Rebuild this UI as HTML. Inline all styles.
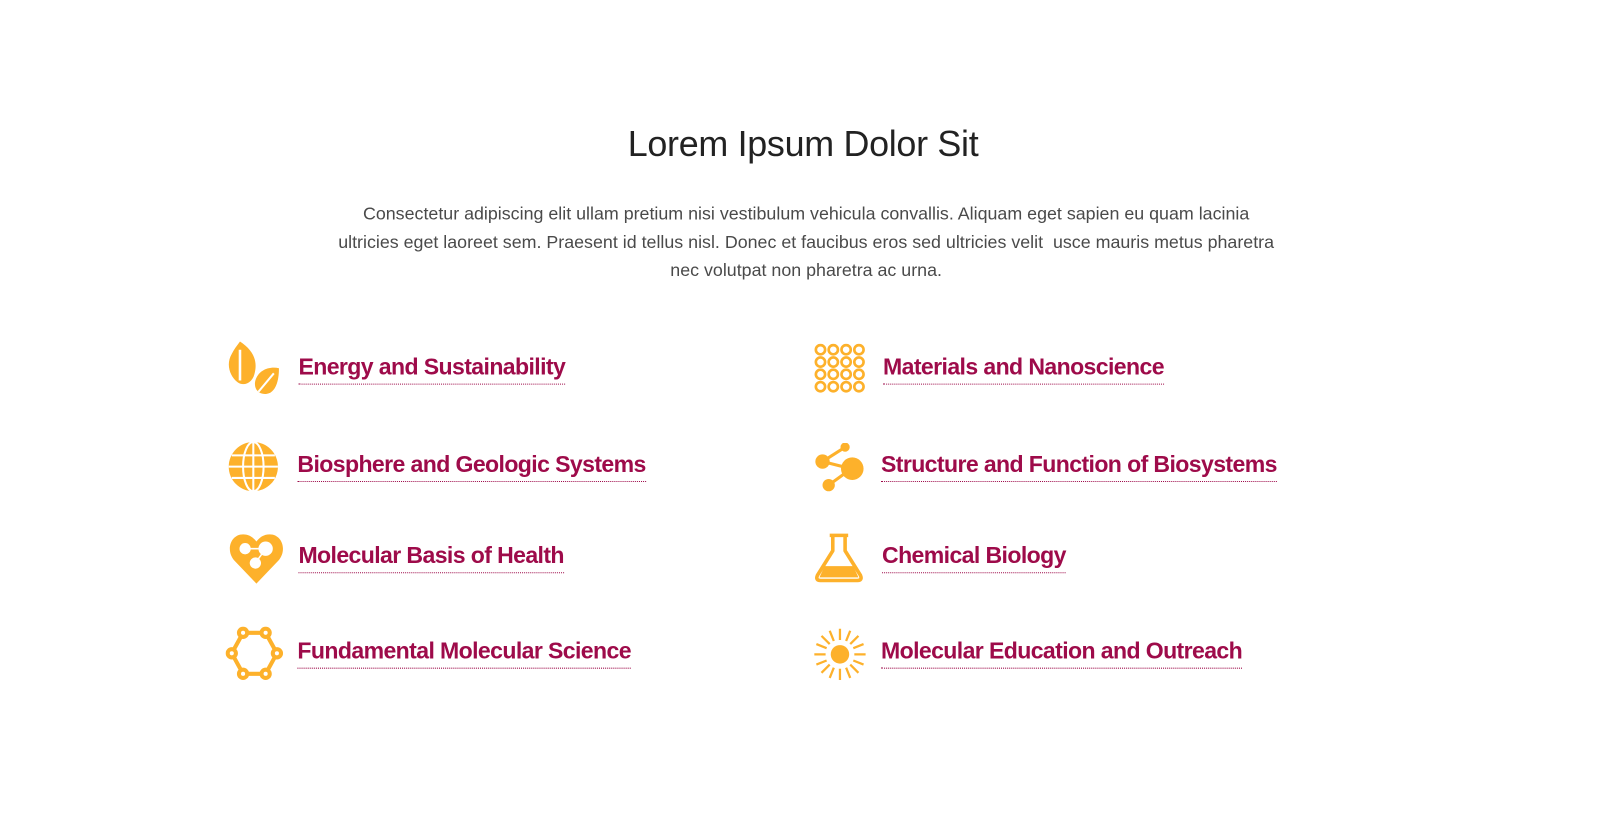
<!DOCTYPE html>
<html><head><meta charset="utf-8"><style>
body{margin:0;width:1600px;height:835px;background:#fff;font-family:"Liberation Sans",sans-serif;position:relative;overflow:hidden}
#w{position:absolute;left:0;top:0;width:1560px;height:815px;transform:scale(1.0256);transform-origin:0 0}
h1{position:absolute;top:121px;left:0;width:1566px;text-align:center;margin:0;font-weight:400;font-size:35px;color:#222;letter-spacing:-0.3px}
p{position:absolute;top:195px;left:0;width:1572px;text-align:center;margin:0;font-size:17.4px;line-height:27.5px;color:#4a4a4a;letter-spacing:0px}
.l{position:absolute;font-weight:700;font-size:22.5px;color:#9e0b4a;letter-spacing:-0.6px;border-bottom:1px dotted #9e0b4a;line-height:26px;padding-bottom:3px;white-space:nowrap}
svg{position:absolute}
</style></head><body><div id="w">
<h1>Lorem Ipsum Dolor Sit</h1>
<p>Consectetur adipiscing elit ullam pretium nisi vestibulum vehicula convallis. Aliquam eget sapien eu quam lacinia<br>ultricies eget laoreet sem. Praesent id tellus nisl. Donec et faucibus eros sed ultricies velit&nbsp; usce mauris metus pharetra<br>nec volutpat non pharetra ac urna.</p>

<svg style="left:222px;top:333px" width="52" height="52" viewBox="0 0 52 52"><g fill="#fdb12b">
<path d="M12 0 C24 8 30 18 26 32 C24 40 16 44 10 40 C2 34 -2 22 4 12 C6 8 9 4 12 0Z"/>
<path d="M50 26 C40 24 30 28 27 38 C25 46 30 52 38 51 C46 50 50 40 50 26Z"/></g>
<path d="M12 8 L12 38" stroke="#fff" stroke-width="2.5"/><path d="M45 31 L30 49" stroke="#fff" stroke-width="2"/></svg>
<span class="l" style="left:291px;top:345px">Energy and Sustainability</span>

<svg style="left:222px;top:430px" width="50" height="50" viewBox="0 0 50 50"><circle cx="25" cy="25" r="24" fill="#fdb12b"/>
<g stroke="#fff" stroke-width="2" fill="none"><ellipse cx="25" cy="25" rx="10" ry="24"/><line x1="25" y1="1" x2="25" y2="49"/><line x1="1" y1="25" x2="49" y2="25"/><line x1="4" y1="14" x2="46" y2="14"/><line x1="4" y1="36" x2="46" y2="36"/></g></svg>
<span class="l" style="left:290px;top:440px">Biosphere and Geologic Systems</span>

<svg style="left:223px;top:520px" width="54" height="50" viewBox="0 0 54 50"><path d="M27 49 L5 26 C-3 16 2 1 14 1 C20 1 24 4 27 8 C30 4 34 1 40 1 C52 1 57 16 49 26Z" fill="#fdb12b"/>
<g fill="#fff" stroke="#fff"><circle cx="16" cy="15" r="5"/><circle cx="36" cy="15" r="6.5"/><circle cx="26" cy="29" r="5"/><line x1="16" y1="15" x2="36" y2="15" stroke-width="1.5"/><line x1="26" y1="29" x2="36" y2="15" stroke-width="1.5"/></g></svg>
<span class="l" style="left:291px;top:529px">Molecular Basis of Health</span>

<svg style="left:220px;top:611px" width="56" height="52" viewBox="0 0 56 52"><g stroke="#fdb12b" stroke-width="4" fill="#fff">
<polygon points="17,6 39,6 50,26 39,46 17,46 6,26" fill="none"/>
<circle cx="17" cy="6" r="4"/><circle cx="39" cy="6" r="4"/><circle cx="50" cy="26" r="4"/><circle cx="39" cy="46" r="4"/><circle cx="17" cy="46" r="4"/><circle cx="6" cy="26" r="4"/></g></svg>
<span class="l" style="left:290px;top:622px">Fundamental Molecular Science</span>

<svg style="left:794px;top:335px" width="50" height="50" viewBox="0 0 50 50"><g stroke="#fdb12b" stroke-width="2.6" fill="none">
<circle cx="6" cy="6" r="4.5"/><circle cx="18.5" cy="6" r="4.5"/><circle cx="31" cy="6" r="4.5"/><circle cx="43.5" cy="6" r="4.5"/>
<circle cx="6" cy="18" r="4.5"/><circle cx="18.5" cy="18" r="4.5"/><circle cx="31" cy="18" r="4.5"/><circle cx="43.5" cy="18" r="4.5"/>
<circle cx="6" cy="30" r="4.5"/><circle cx="18.5" cy="30" r="4.5"/><circle cx="31" cy="30" r="4.5"/><circle cx="43.5" cy="30" r="4.5"/>
<circle cx="6" cy="42" r="4.5"/><circle cx="18.5" cy="42" r="4.5"/><circle cx="31" cy="42" r="4.5"/><circle cx="43.5" cy="42" r="4.5"/></g></svg>
<span class="l" style="left:861px;top:345px">Materials and Nanoscience</span>

<svg style="left:794px;top:432px" width="50" height="50" viewBox="0 0 50 50"><g fill="#fdb12b" stroke="#fdb12b" stroke-width="3">
<line x1="8" y1="18" x2="30" y2="4"/><line x1="8" y1="18" x2="36" y2="25"/><line x1="14" y1="41" x2="36" y2="25"/></g>
<g fill="#fdb12b"><circle cx="8" cy="18" r="7"/><circle cx="30" cy="4" r="4.5"/><circle cx="37" cy="25" r="11"/><circle cx="14" cy="41" r="6"/></g></svg>
<span class="l" style="left:859px;top:440px">Structure and Function of Biosystems</span>

<svg style="left:794px;top:519px" width="48" height="50" viewBox="0 0 48 50"><g fill="none" stroke="#fdb12b" stroke-width="3.5" stroke-linejoin="round">
<line x1="15" y1="3" x2="33" y2="3"/><path d="M18 3 V18 L3 42 Q1 47 6 47 H42 Q47 47 45 42 L30 18 V3"/></g>
<path d="M10 33 H38 L43 44 H5Z" fill="#fdb12b"/></svg>
<span class="l" style="left:860px;top:529px">Chemical Biology</span>

<svg style="left:793px;top:612px" width="52" height="52" viewBox="0 0 52 52"><circle cx="26" cy="26" r="9" fill="#fdb12b"/>
<g stroke="#fdb12b" stroke-width="2.2">
<line x1="26" y1="1" x2="26" y2="12"/><line x1="26" y1="40" x2="26" y2="51"/><line x1="1" y1="26" x2="12" y2="26"/><line x1="40" y1="26" x2="51" y2="26"/>
<line x1="8" y1="8" x2="16" y2="16"/><line x1="36" y1="36" x2="44" y2="44"/><line x1="44" y1="8" x2="36" y2="16"/><line x1="16" y1="36" x2="8" y2="44"/>
<line x1="16" y1="3" x2="20" y2="13"/><line x1="36" y1="3" x2="32" y2="13"/><line x1="16" y1="49" x2="20" y2="39"/><line x1="36" y1="49" x2="32" y2="39"/>
<line x1="3" y1="16" x2="13" y2="20"/><line x1="3" y1="36" x2="13" y2="32"/><line x1="49" y1="16" x2="39" y2="20"/><line x1="49" y1="36" x2="39" y2="32"/></g></svg>
<span class="l" style="left:859px;top:622px">Molecular Education and Outreach</span>
</div></body></html>
